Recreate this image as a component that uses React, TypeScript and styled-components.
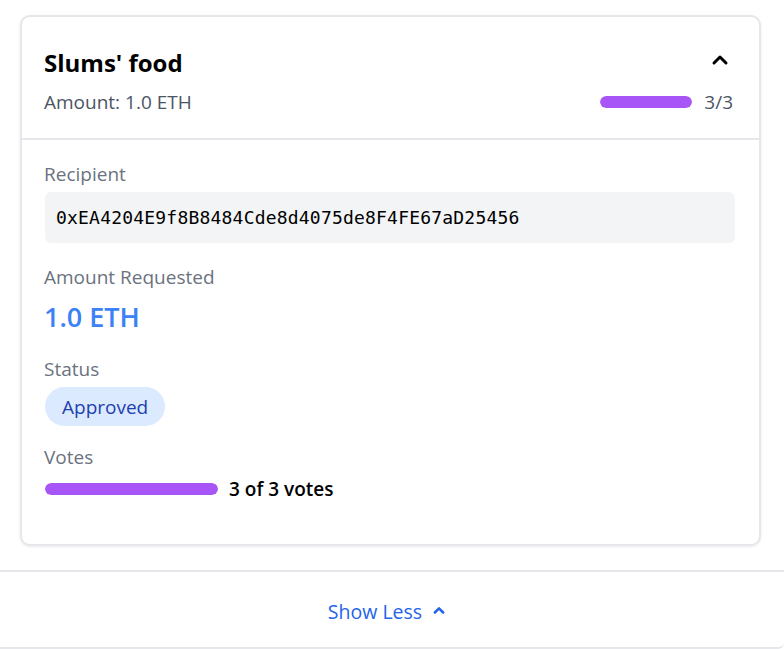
import React from "react";
import styled, { createGlobalStyle } from "styled-components";

const Global = createGlobalStyle`
  html, body { margin: 0; padding: 0; background: #ffffff; }
  body { font-family: "Open Sans", "Noto Sans", sans-serif; color: #111827; }
  * { box-sizing: border-box; }
`;

const Page = styled.div`
  width: 784px;
  height: 649px;
  overflow: hidden;
  display: flex;
  flex-direction: column;
`;

const CardArea = styled.div`
  padding: 15px 23px 24px 20px;
`;

const Card = styled.div`
  border: 2px solid #e5e7eb;
  border-radius: 10px;
  background: #fff;
  box-shadow: 0 1px 3px rgba(0, 0, 0, 0.08);
`;

const Header = styled.div`
  padding: 30px 26px 24px 22px;
  border-bottom: 2px solid #e5e7eb;
  display: flex;
  flex-direction: column;
  gap: 11px;
`;

const Row = styled.div`
  display: flex;
  align-items: center;
  justify-content: space-between;
`;

const Title = styled.h3`
  margin: 0;
  font-size: 24px;
  font-weight: 700;
  color: #000;
  line-height: 32px;
`;

const Sub = styled.span`
  font-size: 19px;
  color: #4b5563;
  line-height: 24px;
`;

const Mini = styled.div`
  display: flex;
  align-items: center;
  gap: 12px;
  font-size: 19px;
  line-height: 24px;
  color: #4b5563;
`;

const Track = styled.div<{ $w: number }>`
  width: ${(p) => p.$w}px;
  height: 12px;
  border-radius: 6px;
  background: #e5e7eb;
  overflow: hidden;
`;

const Fill = styled.div`
  height: 100%;
  background: #a855f7;
  border-radius: 6px;
`;

const Body = styled.div`
  padding: 20px 24px 41px 22px;
  display: flex;
  flex-direction: column;
`;

const Field = styled.div<{ $mb: number }>`
  display: flex;
  flex-direction: column;
  margin-bottom: ${(p) => p.$mb}px;
`;

const Label = styled.div`
  font-size: 19px;
  color: #6b7280;
  line-height: 28px;
  margin-bottom: 4px;
`;

const Address = styled.div`
  background: #f3f4f6;
  border-radius: 6px;
  height: 51px;
  display: flex;
  align-items: center;
  padding: 0 11px;
  margin-left: 1px;
  font-family: "DejaVu Sans Mono", "Liberation Mono", monospace;
  font-size: 18px;
  letter-spacing: 0.2px;
  color: #000;
`;

const Big = styled.div`
  font-size: 27px;
  font-weight: 600;
  color: #3b82f6;
  line-height: 44px;
`;

const Pill = styled.span`
  align-self: flex-start;
  margin-left: 1px;
  background: #dbeafe;
  color: #1e40af;
  border-radius: 20px;
  height: 39px;
  padding: 0 17px;
  display: flex;
  align-items: center;
  font-size: 19px;
`;

const Votes = styled.div`
  display: flex;
  align-items: center;
  gap: 11px;
  padding-left: 1px;
  line-height: 28px;
`;

const VoteText = styled.span`
  font-size: 19px;
  font-weight: 600;
  color: #000;
`;

const Footer = styled.div`
  border-top: 2px solid #e5e7eb;
  border-bottom: 2px solid #e5e7eb;
  border-bottom-right-radius: 6px;
  height: 80px;
  padding: 3px 7px 0 0;
  display: flex;
  align-items: center;
  justify-content: center;
`;

const ShowLess = styled.button`
  border: none;
  background: none;
  font-family: inherit;
  font-size: 19.5px;
  color: #2563eb;
  display: flex;
  align-items: center;
  gap: 7px;
  cursor: pointer;
  padding: 0;
`;

const HeadIcon = styled.svg`
  margin: 0 1px 6px 0;
`;

const SmallIcon = styled.svg`
  margin-bottom: 3px;
`;

export default function App() {
  return (
    <Page>
      <Global />
      <CardArea>
        <Card>
          <Header>
            <Row>
              <Title>Slums' food</Title>
              <HeadIcon width={24} height={24} viewBox="0 0 24 24" fill="none" stroke="#000" strokeWidth={3} strokeLinecap="round" strokeLinejoin="round">
                <path d="M6 15l6-6 6 6" />
              </HeadIcon>
            </Row>
            <Row>
              <Sub>Amount: 1.0 ETH</Sub>
              <Mini>
                <Track $w={92}>
                  <Fill style={{ width: "100%" }} />
                </Track>
                3/3
              </Mini>
            </Row>
          </Header>
          <Body>
            <Field $mb={20}>
              <Label>Recipient</Label>
              <Address>0xEA4204E9f8B8484Cde8d4075de8F4FE67aD25456</Address>
            </Field>
            <Field $mb={16}>
              <Label>Amount Requested</Label>
              <Big>1.0 ETH</Big>
            </Field>
            <Field $mb={17}>
              <Label>Status</Label>
              <Pill>Approved</Pill>
            </Field>
            <Field $mb={0}>
              <Label>Votes</Label>
              <Votes>
                <Track $w={173}>
                  <Fill style={{ width: "100%" }} />
                </Track>
                <VoteText>3 of 3 votes</VoteText>
              </Votes>
            </Field>
          </Body>
        </Card>
      </CardArea>
      <Footer>
        <ShowLess>
          Show Less
          <SmallIcon width={20} height={20} viewBox="0 0 24 24" fill="none" stroke="#2563eb" strokeWidth={3} strokeLinecap="round" strokeLinejoin="round">
            <path d="M7 15l5-5 5 5" />
          </SmallIcon>
        </ShowLess>
      </Footer>
    </Page>
  );
}
